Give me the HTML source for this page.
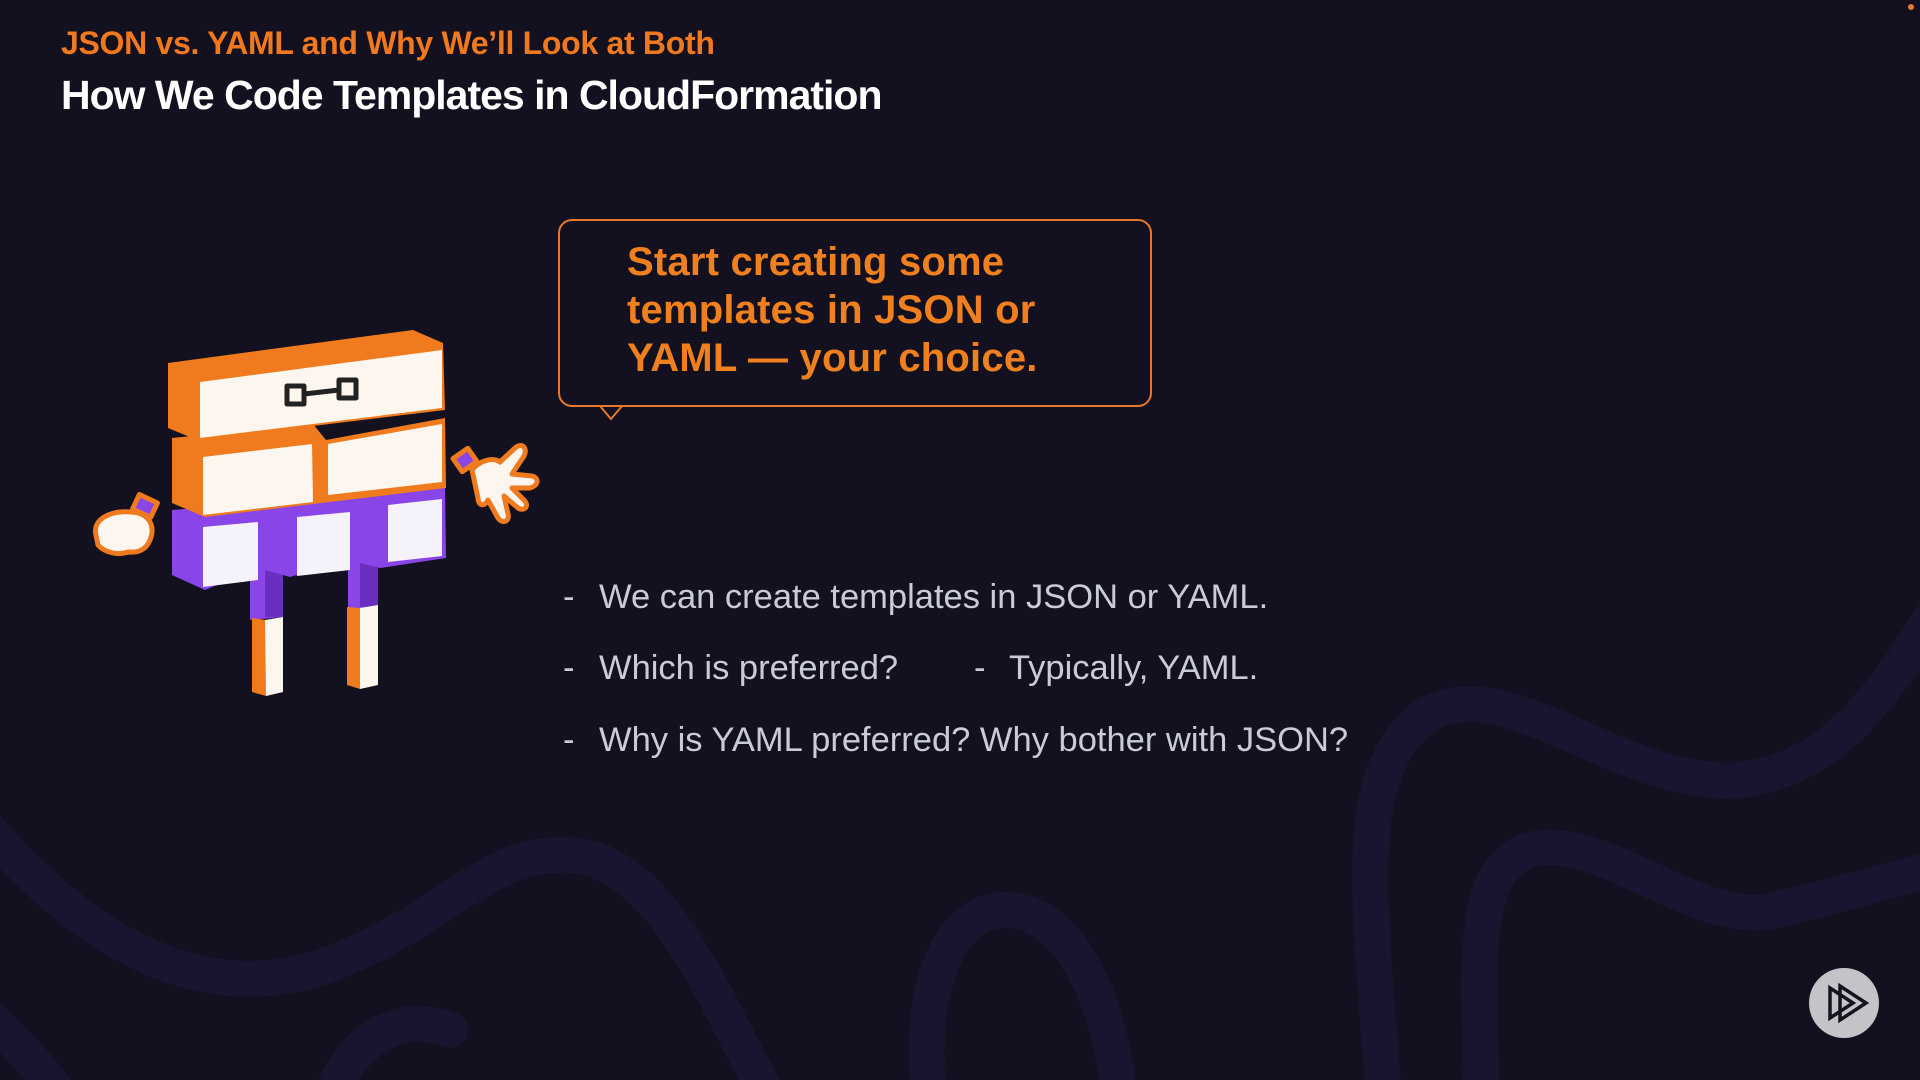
<!DOCTYPE html>
<html><head><meta charset="utf-8"><style>
html,body{margin:0;padding:0;width:1920px;height:1080px;overflow:hidden;background:#13111f;}
body{position:relative;font-family:"Liberation Sans",sans-serif;}
.t{position:absolute;white-space:nowrap;}
.sub{left:61px;top:25px;font-size:32px;font-weight:bold;color:#f0781e;letter-spacing:-0.3px;}
.ttl{left:61px;top:72px;font-size:41px;font-weight:bold;color:#fff;letter-spacing:-1px;}
.bub{position:absolute;left:558px;top:219px;width:594px;height:188px;border:2px solid #e8782a;border-radius:14px;box-sizing:border-box;}
.bt{position:absolute;left:627px;top:238px;font-size:40px;line-height:48px;font-weight:bold;color:#f0801e;letter-spacing:0.2px;}
.bl{font-size:34.5px;color:#c9cbd8;}
</style></head><body>
<svg width="1920" height="1080" style="position:absolute;left:0;top:0">
<g fill="none" stroke="#181530" stroke-width="36" stroke-linecap="round">
<path d="M-20,820 C100,960 220,1010 340,960 C450,915 490,850 570,855 C660,860 710,990 770,1100"/>
<path d="M-20,1010 C40,1060 60,1100 80,1120"/>
<path d="M930,1100 C915,990 950,910 1005,910 C1070,910 1110,1000 1120,1100"/>
<path d="M330,1100 C350,1040 400,1010 450,1030"/>
<path d="M1384,1100 C1370,900 1350,780 1420,720 C1500,660 1620,790 1739,780 C1830,770 1880,700 1930,620"/>
<path d="M1482,1100 C1478,960 1470,870 1530,850 C1600,830 1700,930 1776,910 C1840,895 1890,880 1930,870"/>
</g>
<g stroke-linejoin="round">
<polygon points="250,563 283,560 283,617 250,620" fill="#8a45e8"/>
<polygon points="265,563 283,560 283,617 265,617" fill="#6a2fc0"/>
<polygon points="252,618 266,620 266,696 252,692" fill="#f07a1e"/>
<polygon points="265,620 283,617 283,692 266,696" fill="#fdf6ee"/>
<polygon points="348,550 378,547 378,607 348,609" fill="#8a45e8"/>
<polygon points="360,550 378,547 378,607 360,607" fill="#6a2fc0"/>
<polygon points="347,607 360,608 360,689 347,685" fill="#f07a1e"/>
<polygon points="360,608 378,605 378,685 360,689" fill="#fdf6ee"/>
<polygon points="172,510 445,488 446,558 380,568 348,560 290,577 258,568 205,590 172,575" fill="#8a45e8"/>
<polygon points="203,527 258,522 258,580 203,587" fill="#f6f2fc"/>
<polygon points="297,517 350,512 350,570 297,576" fill="#f6f2fc"/>
<polygon points="388,505 442,499 442,556 388,562" fill="#f6f2fc"/>
<polygon points="172,438 313,424 326,440 445,418 446,488 205,517 172,503" fill="#f07a1e"/>
<polygon points="203,457 312,444 313,502 203,515" fill="#fdf6ee"/>
<polygon points="328,444 442,424 442,482 328,495" fill="#fdf6ee"/>
<polygon points="168,363 413,330 443,343 445,410 197,440 168,428" fill="#f07a1e"/>
<polygon points="200,382 442,350 442,408 200,438" fill="#fdf6ee"/>
<g fill="none" stroke="#222" stroke-width="5">
<rect x="287" y="386" width="17" height="18"/>
<rect x="339" y="380" width="17" height="18"/>
<line x1="304" y1="394" x2="339" y2="390"/>
</g>
<rect x="135" y="498" width="20" height="16" fill="#8a45e8" stroke="#f07a1e" stroke-width="5" transform="rotate(25 145 506)"/>
<path d="M96,535 C92,520 110,510 130,512 C148,512 156,525 150,540 C146,550 138,553 128,552 C118,556 104,552 98,545 Z" fill="#fdf6ee" stroke="#f07a1e" stroke-width="5"/>
<rect x="456" y="452" width="18" height="16" fill="#8a45e8" stroke="#f07a1e" stroke-width="5" transform="rotate(-35 465 460)"/>
<path d="M472,470 C478,462 492,456 500,462 L515,448 C522,442 528,448 524,456 L512,474 L532,476 C540,478 538,486 530,488 L512,488 L524,500 C530,506 524,512 518,508 L504,496 L508,514 C510,522 502,524 498,518 L488,500 C484,508 478,505 478,498 Z" fill="#fdf6ee" stroke="#f07a1e" stroke-width="5"/>
</g>
<polygon points="600,406 622,406 611,419" fill="#13111f" stroke="#e8782a" stroke-width="2"/>
<rect x="601" y="403" width="20" height="4" fill="#13111f"/>
<circle cx="1844" cy="1003" r="35" fill="#c4c4c8"/>
<g fill="none" stroke="#15131f" stroke-width="3.5" stroke-linejoin="miter">
<polygon points="1830,988 1830,1018 1853,1003"/>
<polygon points="1840,986 1840,1020 1866,1003"/>
</g>
<circle cx="1911" cy="7" r="3" fill="#e8782a"/>
</svg>
<div class="t sub">JSON vs. YAML and Why We’ll Look at Both</div>
<div class="t ttl">How We Code Templates in CloudFormation</div>
<div class="bub"></div>
<div class="t bt">Start creating some<br>templates in JSON or<br>YAML — your choice.</div>
<div class="t bl" style="left:563px;top:578px">-</div>
<div class="t bl" style="left:599px;top:578px">We can create templates in JSON or YAML.</div>
<div class="t bl" style="left:563px;top:649px">-</div>
<div class="t bl" style="left:599px;top:649px">Which is preferred?</div>
<div class="t bl" style="left:974px;top:649px">-</div>
<div class="t bl" style="left:1009px;top:649px">Typically, YAML.</div>
<div class="t bl" style="left:563px;top:721px">-</div>
<div class="t bl" style="left:599px;top:721px">Why is YAML preferred? Why bother with JSON?</div>
</body></html>
